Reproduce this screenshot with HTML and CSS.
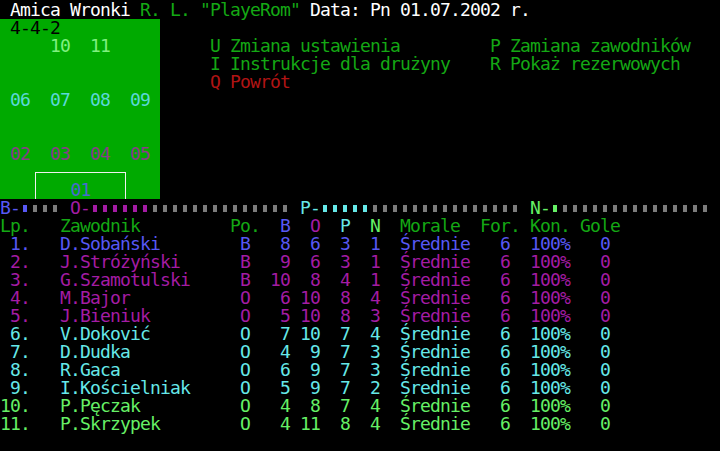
FILE: index.html
```html
<!DOCTYPE html>
<html lang="pl">
<head>
<meta charset="utf-8">
<title>Amica Wronki - skład</title>
<link rel="stylesheet" href="styles.css">
</head>
<body>
<div class="screen">
  <div class="line"><span class="w"> Amica Wronki</span><span class="g"> R. L. "PlayeRom"</span><span class="w"> Data: Pn 01.07.2002 r.</span></div>

  <div class="top">
    <div class="field">
      <div class="frow k pad1">4-4-2</div>
      <div class="frow nums fl pad5"><span>10</span><span>11</span></div>
      <div class="frow nums fc pad1 gap2"><span>06</span><span>07</span><span>08</span><span>09</span></div>
      <div class="frow nums fm pad1 gap2"><span>02</span><span>03</span><span>04</span><span>05</span></div>
      <div class="goal"><span class="fb">01</span></div>
    </div>
    <div class="menu">
      <div class="mrow"><span class="mcol g">U Zmiana ustawienia</span><span class="g">P Zamiana zawodników</span></div>
      <div class="mrow"><span class="mcol g">I Instrukcje dla drużyny</span><span class="g">R Pokaż rezerwowych</span></div>
      <div class="mrow"><span class="mcol r">Q Powrót</span></div>
    </div>
  </div>

  <div class="bar">
    <span class="lab b">B-</span><i class="sq sb"></i><i class="sq"></i><i class="sq"></i><i class="sq"></i>
    <span class="lab m sp">O-</span><i class="sq sm"></i><i class="sq sm"></i><i class="sq sm"></i><i class="sq sm"></i><i class="sq sm"></i><i class="sq sm"></i><i class="sq"></i><i class="sq"></i><i class="sq"></i><i class="sq"></i><i class="sq"></i><i class="sq"></i><i class="sq"></i><i class="sq"></i><i class="sq"></i><i class="sq"></i><i class="sq"></i><i class="sq"></i><i class="sq"></i><i class="sq"></i>
    <span class="lab c sp">P-</span><i class="sq sc"></i><i class="sq sc"></i><i class="sq sc"></i><i class="sq sc"></i><i class="sq sc"></i><i class="sq"></i><i class="sq"></i><i class="sq"></i><i class="sq"></i><i class="sq"></i><i class="sq"></i><i class="sq"></i><i class="sq"></i><i class="sq"></i><i class="sq"></i><i class="sq"></i><i class="sq"></i><i class="sq"></i><i class="sq"></i><i class="sq"></i>
    <span class="lab lg sp">N-</span><i class="sq sl"></i><i class="sq"></i><i class="sq"></i><i class="sq"></i><i class="sq"></i><i class="sq"></i><i class="sq"></i><i class="sq"></i><i class="sq"></i><i class="sq"></i><i class="sq"></i><i class="sq"></i><i class="sq"></i><i class="sq"></i><i class="sq"></i><i class="sq"></i>
  </div>

  <div class="table">
    <div class="row head">
      <span class="lp g">Lp.</span><span class="name g">Zawodnik</span><span class="po g">Po.</span>
      <span class="n b">B</span><span class="n m">O</span><span class="n c">P</span><span class="n lg">N</span>
      <span class="mor g">Morale</span><span class="for g">For.</span><span class="kon g">Kon.</span><span class="gole g">Gole</span>
    </div>
    <div class="row b">
      <span class="lp">1.</span><span class="name">D.Sobański</span><span class="po">B</span>
      <span class="n">8</span><span class="n">6</span><span class="n">3</span><span class="n">1</span>
      <span class="mor">Średnie</span><span class="for">6</span><span class="kon">100%</span><span class="gole">0</span>
    </div>
    <div class="row m">
      <span class="lp">2.</span><span class="name">J.Stróżyński</span><span class="po">B</span>
      <span class="n">9</span><span class="n">6</span><span class="n">3</span><span class="n">1</span>
      <span class="mor">Średnie</span><span class="for">6</span><span class="kon">100%</span><span class="gole">0</span>
    </div>
    <div class="row m">
      <span class="lp">3.</span><span class="name">G.Szamotulski</span><span class="po">B</span>
      <span class="n">10</span><span class="n">8</span><span class="n">4</span><span class="n">1</span>
      <span class="mor">Średnie</span><span class="for">6</span><span class="kon">100%</span><span class="gole">0</span>
    </div>
    <div class="row m">
      <span class="lp">4.</span><span class="name">M.Bajor</span><span class="po">O</span>
      <span class="n">6</span><span class="n">10</span><span class="n">8</span><span class="n">4</span>
      <span class="mor">Średnie</span><span class="for">6</span><span class="kon">100%</span><span class="gole">0</span>
    </div>
    <div class="row m">
      <span class="lp">5.</span><span class="name">J.Bieniuk</span><span class="po">O</span>
      <span class="n">5</span><span class="n">10</span><span class="n">8</span><span class="n">3</span>
      <span class="mor">Średnie</span><span class="for">6</span><span class="kon">100%</span><span class="gole">0</span>
    </div>
    <div class="row c">
      <span class="lp">6.</span><span class="name">V.Doković</span><span class="po">O</span>
      <span class="n">7</span><span class="n">10</span><span class="n">7</span><span class="n">4</span>
      <span class="mor">Średnie</span><span class="for">6</span><span class="kon">100%</span><span class="gole">0</span>
    </div>
    <div class="row c">
      <span class="lp">7.</span><span class="name">D.Dudka</span><span class="po">O</span>
      <span class="n">4</span><span class="n">9</span><span class="n">7</span><span class="n">3</span>
      <span class="mor">Średnie</span><span class="for">6</span><span class="kon">100%</span><span class="gole">0</span>
    </div>
    <div class="row c">
      <span class="lp">8.</span><span class="name">R.Gaca</span><span class="po">O</span>
      <span class="n">6</span><span class="n">9</span><span class="n">7</span><span class="n">3</span>
      <span class="mor">Średnie</span><span class="for">6</span><span class="kon">100%</span><span class="gole">0</span>
    </div>
    <div class="row c">
      <span class="lp">9.</span><span class="name">I.Kościelniak</span><span class="po">O</span>
      <span class="n">5</span><span class="n">9</span><span class="n">7</span><span class="n">2</span>
      <span class="mor">Średnie</span><span class="for">6</span><span class="kon">100%</span><span class="gole">0</span>
    </div>
    <div class="row lg">
      <span class="lp">10.</span><span class="name">P.Pęczak</span><span class="po">O</span>
      <span class="n">4</span><span class="n">8</span><span class="n">7</span><span class="n">4</span>
      <span class="mor">Średnie</span><span class="for">6</span><span class="kon">100%</span><span class="gole">0</span>
    </div>
    <div class="row lg">
      <span class="lp">11.</span><span class="name">P.Skrzypek</span><span class="po">O</span>
      <span class="n">4</span><span class="n">11</span><span class="n">8</span><span class="n">4</span>
      <span class="mor">Średnie</span><span class="for">6</span><span class="kon">100%</span><span class="gole">0</span>
    </div>
  </div>
</div>
</body>
</html>
```
FILE: styles.css
```css
html, body {
  margin: 0;
  padding: 0;
  background: #000;
}
.screen {
  width: 720px;
  height: 451px;
  box-sizing: border-box;
  padding-top: 1px;
  overflow: hidden;
  background: #000;
  font-family: "DejaVu Sans Mono", "Liberation Mono", monospace;
  font-size: 18px;
  letter-spacing: -0.837px;
  color: #aaaaaa;
}
.line, .frow, .mrow, .row {
  height: 18px;
  line-height: 18px;
  white-space: pre;
}

/* colours */
.w { color: #ffffff; }
.g { color: #14a814; }
.lg { color: #66f066; }
.b { color: #5858f4; }
.m { color: #a41ca4; }
.c { color: #66e8e8; }
.r { color: #b01414; }
.k { color: #000000; }

/* top area */
.top {
  display: flex;
  height: 180px;
}
.field {
  width: 160px;
  height: 180px;
  background: #00aa00;
  display: flex;
  flex-direction: column;
}
.nums {
  display: flex;
}
.pad1 { padding-left: 10px; }
.pad5 { padding-left: 50px; gap: 20px; }
.gap2 { gap: 20px; }
.fc { color: #5cd8d8; margin-top: 36px; }
.fm { color: #8a3c8a; margin-top: 36px; }
.fl { color: #80f080; }
.fb { color: #4a68d0; }
.goal {
  margin: 9px 0 0 35px;
  width: 89px;
  height: 18px;
  border: 1px solid #f0f0f0;
  border-bottom: none;
  padding-top: 8px;
  text-align: center;
  line-height: 18px;
}
.menu {
  margin-left: 50px;
  padding-top: 18px;
  display: flex;
  flex-direction: column;
}
.mrow {
  display: flex;
}
.mcol {
  width: 280px;
}

/* skill bar */
.bar {
  display: flex;
  height: 18px;
  line-height: 18px;
  white-space: pre;
}
.lab {
  width: 20px;
}
.lab.sp {
  margin-left: 10px;
}
.sq {
  display: block;
  width: 4px;
  height: 7px;
  margin: 6px 3px 0;
  background: #7c7c7c;
}
.sq.sb { background: #5858f4; }
.sq.sm { background: #a41ca4; }
.sq.sc { background: #66e8e8; }
.sq.sl { background: #66f066; }

/* table */
.row {
  display: grid;
  grid-template-columns: 30px 200px 30px 30px 30px 30px 30px 100px 40px 50px 50px;
}
.lp { text-align: right; }
.name { padding-left: 30px; }
.po { text-align: center; }
.head .po { text-align: left; }
.n { text-align: right; }
.mor { padding-left: 20px; }
.for { text-align: right; padding-right: 10px; }
.head .for { text-align: left; padding-right: 0; }
.kon { text-align: right; }
.gole { text-align: right; padding-right: 10px; }
.head .gole { text-align: left; padding: 0 0 0 10px; }
```
